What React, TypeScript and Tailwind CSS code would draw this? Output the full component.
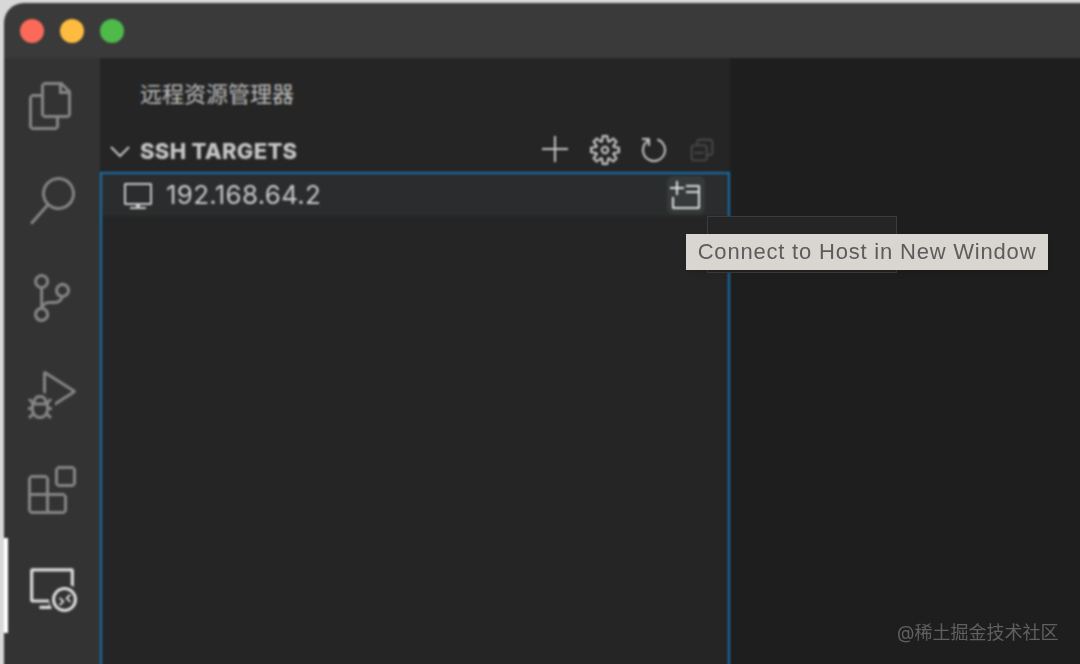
import {
  VscAdd,
  VscCollapseAll,
  VscDebugAlt,
  VscEmptyWindow,
  VscExtensions,
  VscFiles,
  VscRefresh,
  VscRemoteExplorer,
  VscSearch,
  VscSettingsGear,
  VscSourceControl,
  VscVm,
} from "react-icons/vsc";

const cjk = "font-['Inter','Noto_Sans_CJK_SC',sans-serif]";

function ActivityBar() {
  return (
    <div className="relative w-[96px] shrink-0 bg-[#333333] text-[#858585] flex flex-col items-center pt-[24px]">
      <VscFiles size={48} className="mb-[47px] ml-[-2px]" />
      <VscSearch size={48} className="mb-[49px]" />
      <VscSourceControl size={48} className="mb-[49px]" />
      <VscDebugAlt size={48} className="mb-[47px]" />
      <VscExtensions size={48} className="mb-[50px]" />
      <VscRemoteExplorer size={48} className="ml-[2px] text-[#dcdcdc]" />
      <div className="absolute left-0 top-[480px] h-[95px] w-[4px] bg-white" />
    </div>
  );
}

function SshRow() {
  return (
    <div className="h-[42px] bg-[#2a2c2d] flex items-center pl-[20px] pr-[23px] text-[#c8c8c8]">
      <VscVm size={32} className="mr-[12px]" />
      <span className="text-[26px] leading-none tracking-[0.25px] font-['Inter',sans-serif]">192.168.64.2</span>
      <div className="ml-auto h-[38px] w-[38px] rounded-md bg-[#363a3b] flex items-center justify-center text-[#e0e0e0]">
        <VscEmptyWindow size={32} />
      </div>
    </div>
  );
}

function Sidebar() {
  return (
    <div className="w-[630px] shrink-0 bg-[#252525] flex flex-col">
      <div className={`h-[71px] pt-[22px] pl-[40px] text-[22px] leading-[28px] text-[#bdbdbd] ${cjk}`}>远程资源管理器</div>
      <div className="h-[43px] flex items-center pl-[9px] pr-[13px] text-[#c4c4c4]">
        <svg width="22" height="22" viewBox="0 0 22 22" fill="none" stroke="currentColor" strokeWidth="2" className="mr-[9px]">
          <path d="M2 7 l9 9 l9-9" />
        </svg>
        <span className="text-[22px] font-extrabold leading-none tracking-[0.3px] font-['Inter',sans-serif]">SSH TARGETS</span>
        <div className="ml-auto flex items-center gap-[17px] mt-[-2px]">
          <VscAdd size={32} className="mr-[1px]" />
          <VscSettingsGear size={30} className="mr-[1px]" />
          <VscRefresh size={32} />
          <VscCollapseAll size={30} className="text-[#4a4a4a]" />
        </div>
      </div>
      <div className="flex-1 border-2 border-b-0 border-[#1570b0] flex flex-col">
        <SshRow />
      </div>
    </div>
  );
}

export default function App() {
  return (
    <div className="relative h-[664px] w-[1080px] overflow-hidden bg-[#d8d8d8] pl-[4px] pt-[3px]">
      {/* runs past the page edge so the blur does not bleed the light backdrop in */}
      <div className="h-[675px] w-[1090px] rounded-tl-[20px] overflow-hidden flex flex-col blur-[1px]">
        <div className="h-[55px] shrink-0 bg-[#3a3a3a] flex items-center pl-[16px] gap-[16px]">
          <div className="h-[24px] w-[24px] rounded-full bg-[#fb6a58]" />
          <div className="h-[24px] w-[24px] rounded-full bg-[#fdbc40]" />
          <div className="h-[24px] w-[24px] rounded-full bg-[#4fba4a]" />
        </div>
        <div className="flex flex-1 min-h-0">
          <ActivityBar />
          <Sidebar />
          <div className="flex-1 bg-[#1e1e1e]" />
        </div>
      </div>
      <div className="absolute left-[707px] top-[216px] h-[57px] w-[190px] bg-[#252525] border border-[#3c3c3c] blur-[0.5px]" />
      <div className="absolute left-[686px] top-[234px] h-[36px] w-[362px] bg-[#d9d6d2] text-[#5c5c5c] flex items-center justify-center text-[22px] tracking-[0.8px] leading-none font-['Liberation_Sans',sans-serif] blur-[0.6px] shadow-md">
        Connect to Host in New Window
      </div>
      <div className={`absolute left-[897px] top-[621px] text-[18px] leading-[24px] text-[#606060] blur-[0.4px] ${cjk}`}>@稀土掘金技术社区</div>
    </div>
  );
}
